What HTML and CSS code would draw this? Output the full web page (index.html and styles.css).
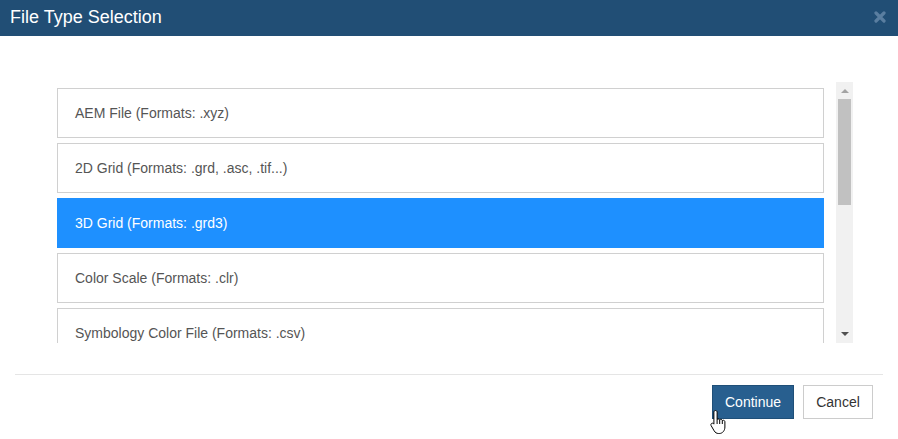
FILE: index.html
```html
<!DOCTYPE html>
<html>
<head>
<meta charset="utf-8">
<link rel="stylesheet" href="styles.css">
</head>
<body>
<div class="modal">
  <div class="modal-header">
    <span class="title">File Type Selection</span>
    <svg class="close" width="12" height="12" viewBox="0 0 12 12"><path d="M2 2L10 10M10 2L2 10" stroke="#5a7ea0" stroke-width="3.2" stroke-linecap="round"/></svg>
  </div>
  <div class="modal-body">
    <div class="scroller">
      <div class="list">
        <div class="item">AEM File (Formats: .xyz)</div>
        <div class="item">2D Grid (Formats: .grd, .asc, .tif...)</div>
        <div class="item selected">3D Grid (Formats: .grd3)</div>
        <div class="item">Color Scale (Formats: .clr)</div>
        <div class="item">Symbology Color File (Formats: .csv)</div>
      </div>
      <div class="scrollbar">
        <div class="arrow up"></div>
        <div class="thumb"></div>
        <div class="spacer"></div>
        <div class="arrow down"></div>
      </div>
    </div>
  </div>
  <div class="modal-footer">
    <button class="btn primary">Continue</button>
    <button class="btn default">Cancel</button>
  </div>
</div>
<svg class="cursor" width="20" height="26" viewBox="0 0 20 26"><path d="M6.5 1.5c.9 0 1.6.7 1.6 1.6v7.2c.3-.2.7-.3 1.1-.3.7 0 1.2.35 1.5.8.3-.25.7-.4 1.1-.4.8 0 1.4.5 1.6 1.1.3-.15.6-.25.9-.25.9 0 1.6.7 1.6 1.6V18c0 3.4-2.2 6.5-5.6 6.5H9.6c-2.1 0-3.4-1-4.4-2.6L2.1 16.6c-.45-.8-.2-1.8.55-2.2.7-.4 1.5-.2 2 .4l.25.3V3.1c0-.9.7-1.6 1.6-1.6z" fill="#fff" stroke="#000" stroke-width="1"/><path d="M8.1 10.3V15M10.7 10.8V15M13.3 11.7V15" stroke="#000" stroke-width="1" fill="none"/></svg>
</body>
</html>
```
FILE: styles.css
```css
html, body {
  margin: 0;
  padding: 0;
  background: #fff;
}
body {
  font-family: "Liberation Sans", Arial, sans-serif;
  width: 898px;
  height: 439px;
  overflow: hidden;
  position: relative;
}
.modal-header {
  height: 36px;
  background: #214e75;
  display: flex;
  align-items: center;
  justify-content: space-between;
  padding: 0 12px 0 10px;
  box-sizing: border-box;
}
.title {
  color: #fff;
  font-size: 18px;
  line-height: 20px;
  margin-top: -3px;
}
.close {
  display: block;
  margin-top: -3px;
}
.modal-body {
  padding: 46px 45px 0 57px;
}
.scroller {
  height: 261px;
  display: flex;
  overflow: hidden;
}
.list {
  flex: 1;
  padding: 6px 12px 0 0;
  display: flex;
  flex-direction: column;
  gap: 5px;
  overflow: hidden;
}
.item {
  flex: none;
  height: 50px;
  box-sizing: border-box;
  border: 1px solid #d0d0d0;
  display: flex;
  align-items: center;
  padding-left: 17px;
  font-size: 14px;
  color: #555;
}
.item.selected {
  background: #1e90ff;
  border-color: #1e90ff;
  color: #fff;
}
.scrollbar {
  width: 17px;
  background: #f1f1f1;
  display: flex;
  flex-direction: column;
  align-items: center;
}
.arrow {
  width: 0;
  height: 0;
  border-left: 4px solid transparent;
  border-right: 4px solid transparent;
}
.arrow.up {
  border-bottom: 4px solid #a3a3a3;
  margin-top: 7px;
}
.arrow.down {
  border-top: 4px solid #505050;
  margin-bottom: 7px;
}
.thumb {
  width: 13px;
  height: 106px;
  background: #c1c1c1;
  margin-top: 6px;
}
.spacer {
  flex: 1;
}
.modal-footer {
  margin: 31px 15px 0 15px;
  border-top: 1px solid #e5e5e5;
  padding: 10px 10px 0 0;
  display: flex;
  justify-content: flex-end;
  gap: 9px;
}
.btn {
  height: 34px;
  font-family: "Liberation Sans", Arial, sans-serif;
  font-size: 14px;
  padding: 0 12px;
  border-radius: 0;
  box-sizing: border-box;
  cursor: pointer;
}
.btn.primary {
  width: 82px;
  background: #285f8f;
  border: 1px solid #1f4f78;
  color: #fff;
}
.btn.default {
  width: 70px;
  background: #fff;
  border: 1px solid #ccc;
  color: #333;
}
.cursor {
  position: absolute;
  left: 709px;
  top: 409px;
}
```
